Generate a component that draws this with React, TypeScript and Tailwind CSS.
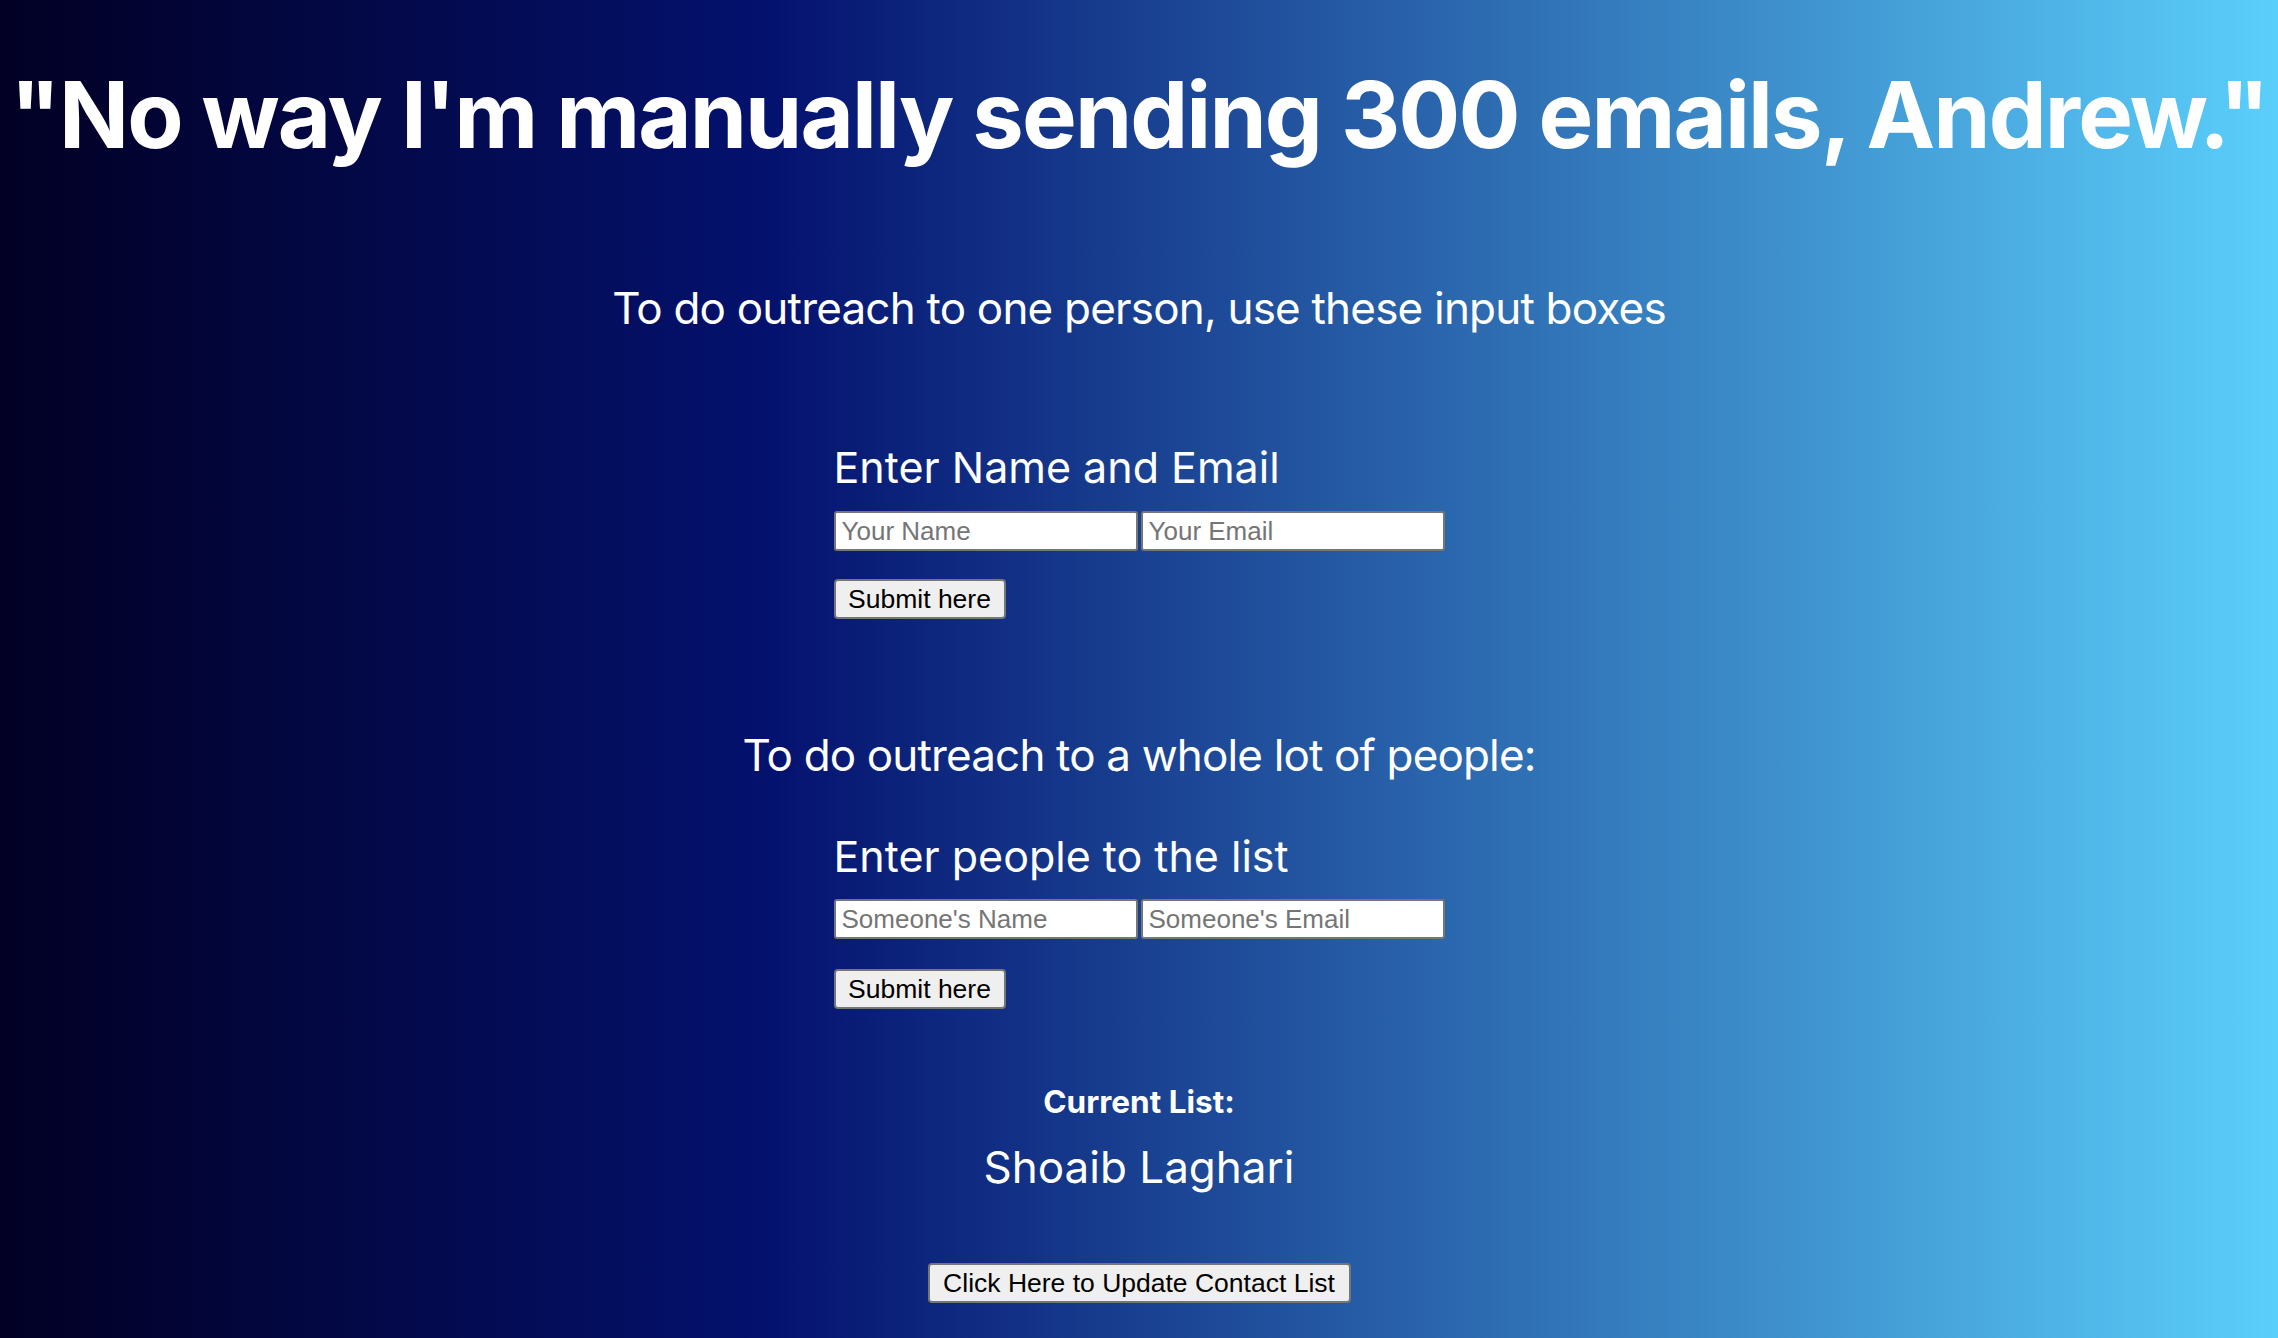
import React from "react";

const sans = "font-['Inter','Noto_Sans',sans-serif]";

function FormBlock({
  title,
  nameHolder,
  emailHolder,
  titleMt,
  inputsMt,
  buttonMt,
}: {
  title: string;
  nameHolder: string;
  emailHolder: string;
  titleMt: string;
  inputsMt: string;
  buttonMt: string;
}) {
  return (
    <div className="w-[611px] flex flex-col items-start text-left">
      <h3
        className={`${sans} ${titleMt} text-[43px] leading-[43px] font-normal text-white whitespace-nowrap`}
      >
        {title}
      </h3>
      <div className={`${inputsMt} flex gap-[3px]`}>
        <input
          type="text"
          placeholder={nameHolder}
          className="w-[304px] h-[40px] bg-white border-2 border-[#767676] rounded-[3px] px-[6px] font-['Liberation_Sans',Arial,sans-serif] text-[26px] text-black placeholder:text-[#757575] outline-none"
        />
        <input
          type="text"
          placeholder={emailHolder}
          className="w-[304px] h-[40px] bg-white border-2 border-[#767676] rounded-[3px] px-[6px] font-['Liberation_Sans',Arial,sans-serif] text-[26px] text-black placeholder:text-[#757575] outline-none"
        />
      </div>
      <button
        type="button"
        className={`${buttonMt} w-[172px] h-[40px] bg-[#efefef] border-2 border-[#767676] rounded-[4px] font-['Liberation_Sans',Arial,sans-serif] text-[26.5px] leading-none text-black flex items-center justify-center`}
      >
        Submit here
      </button>
    </div>
  );
}

export default function App() {
  return (
    <div className="min-h-screen w-full bg-[linear-gradient(90deg,#020024_0%,#04126f_34%,#5bcffb_100%)] flex flex-col items-center text-white overflow-hidden">
      <h1
        className={`${sans} mt-[69px] text-[92px] leading-[92px] font-bold tracking-[-1.9px] whitespace-nowrap`}
      >
        "No way I'm manually sending 300 emails, Andrew."
      </h1>

      <p
        className={`${sans} mt-[125px] text-[44px] leading-[44px] font-normal tracking-[-0.8px] whitespace-nowrap`}
      >
        To do outreach to one person, use these input boxes
      </p>

      <FormBlock
        title="Enter Name and Email"
        nameHolder="Your Name"
        emailHolder="Your Email"
        titleMt="mt-[116px]"
        inputsMt="mt-[22px]"
        buttonMt="mt-[28px]"
      />

      <p
        className={`${sans} mt-[114px] text-[44px] leading-[44px] font-normal tracking-[-0.85px] whitespace-nowrap`}
      >
        To do outreach to a whole lot of people:
      </p>

      <FormBlock
        title="Enter people to the list"
        nameHolder="Someone's Name"
        emailHolder="Someone's Email"
        titleMt="mt-[58px]"
        inputsMt="mt-[21px]"
        buttonMt="mt-[30px]"
      />

      <h4 className={`${sans} mt-[78px] text-[31.5px] leading-[30px] font-bold`}>Current List:</h4>

      <p className={`${sans} mt-[28px] text-[44px] leading-[44px] font-normal`}>Shoaib Laghari</p>

      <button
        type="button"
        className="mt-[74px] w-[423px] h-[40px] bg-[#efefef] border-2 border-[#767676] rounded-[4px] font-['Liberation_Sans',Arial,sans-serif] text-[26.5px] leading-none text-black flex items-center justify-center whitespace-nowrap"
      >
        Click Here to Update Contact List
      </button>
    </div>
  );
}
